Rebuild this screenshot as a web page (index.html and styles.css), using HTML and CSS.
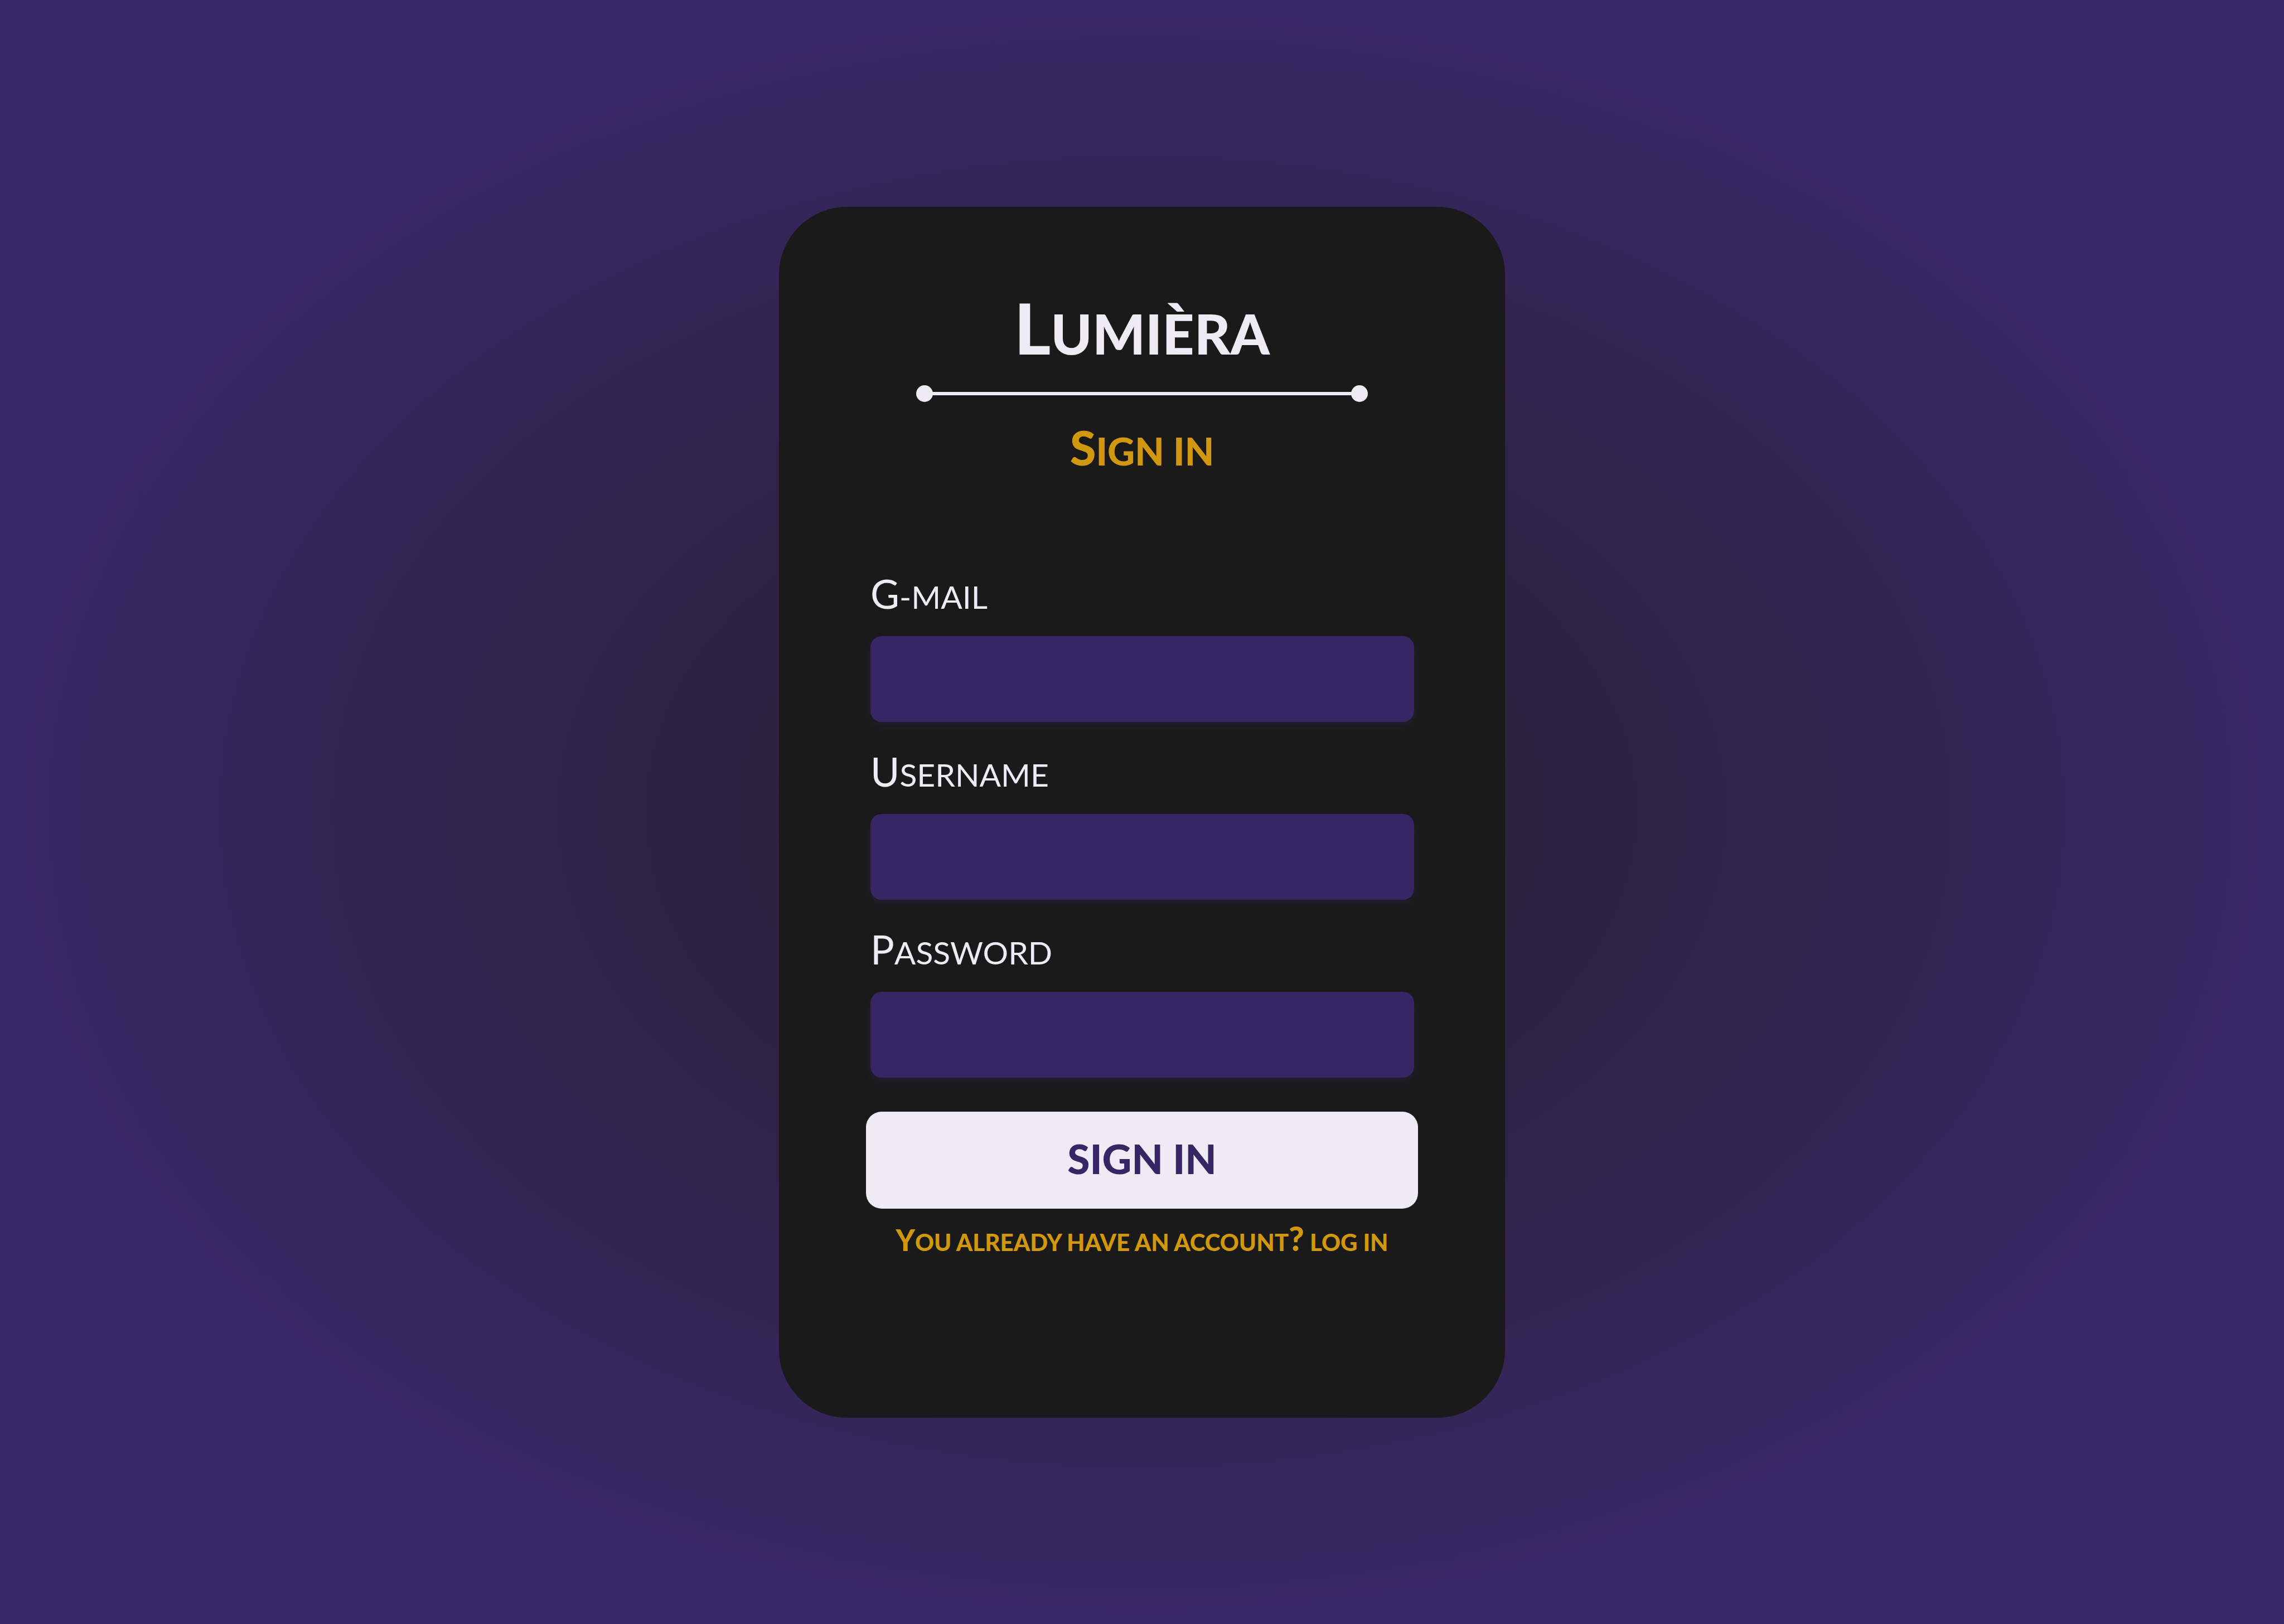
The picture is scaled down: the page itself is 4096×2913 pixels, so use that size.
FILE: index.html
```html
<!DOCTYPE html>
<html lang="en">
<head>
<meta charset="utf-8">
<meta name="viewport" content="width=device-width, initial-scale=1">
<title>Lumièra</title>
<link rel="stylesheet" href="styles.css">
</head>
<body>
<main class="card">
  <h1 class="brand">Lumièra</h1>
  <div class="divider"><span class="dot"></span><span class="rule"></span><span class="dot"></span></div>
  <h2 class="title">Sign in</h2>
  <form class="form">
    <div class="field">
      <label class="label" for="gmail">G-mail</label>
      <input class="input" type="email" id="gmail">
    </div>
    <div class="field">
      <label class="label" for="username">Username</label>
      <input class="input" type="text" id="username">
    </div>
    <div class="field">
      <label class="label" for="password">Password</label>
      <input class="input" type="password" id="password">
    </div>
    <button class="submit" type="submit">sign in</button>
  </form>
  <a class="switch" href="#login">You already have an account<span class="mark">?</span> log in</a>
</main>
</body>
</html>
```
FILE: styles.css
```css
* {
  box-sizing: border-box;
}

body {
  margin: 0;
  min-height: 100vh;
  display: flex;
  align-items: center;
  justify-content: center;
  font-family: Lato, "Open Sans", sans-serif;
  color: #eeebf4;
  background: radial-gradient(ellipse closest-side, #24202a 0%, #382765 100%);
}

.card {
  display: flex;
  flex-direction: column;
  align-items: center;
  width: 100%;
  max-width: 1302px;
  padding: 166px 156px 291px;
  border-radius: 122px;
  background: #1a1a1a;
}

/* Small capitals: full capitals with a larger initial */
.brand,
.title,
.label,
.switch {
  display: block;
  margin: 0;
  text-transform: uppercase;
}

.brand::first-letter,
.title::first-letter,
.label::first-letter,
.switch::first-letter {
  font-size: 1.25em;
  line-height: 1px;
}

.brand {
  font-size: 100px;
  line-height: 120px;
  font-weight: 900;
}

.divider {
  display: flex;
  align-items: center;
  width: 100%;
  max-width: 810px;
  margin-top: 34px;
}

.dot {
  width: 30px;
  height: 30px;
  border-radius: 50%;
  background: #eeebf4;
}

.rule {
  flex: 1;
  height: 6px;
  margin: 0 -2px;
  background: #eeebf4;
}

.title {
  margin-top: 48px;
  font-size: 68px;
  line-height: 80px;
  font-weight: 900;
  color: #d1980f;
}

.form {
  display: flex;
  flex-direction: column;
  gap: 61px;
  width: 100%;
  margin-top: 188px;
}

.field {
  display: flex;
  flex-direction: column;
  gap: 38px;
  padding: 0 7px 0 8px;
}

.label {
  font-size: 57px;
  line-height: 66px;
}

.input {
  width: 100%;
  height: 154px;
  padding: 0 32px;
  border: 0;
  border-radius: 20px;
  font: inherit;
  font-size: 57px;
  color: inherit;
  background: #362663;
  box-shadow: 0 8px 16px rgba(56, 39, 101, 0.25);
}

.submit {
  height: 174px;
  padding: 0 32px 6px;
  border: 0;
  border-radius: 28px;
  font: inherit;
  font-size: 73px;
  font-weight: 900;
  text-transform: uppercase;
  color: #362663;
  background: #eeebf4;
}

.switch {
  margin-top: 36px;
  font-size: 42px;
  line-height: 48px;
  font-weight: 900;
  color: #d1980f;
  text-decoration: none;
}

.mark {
  font-size: 60px;
  line-height: 1px;
}
```
